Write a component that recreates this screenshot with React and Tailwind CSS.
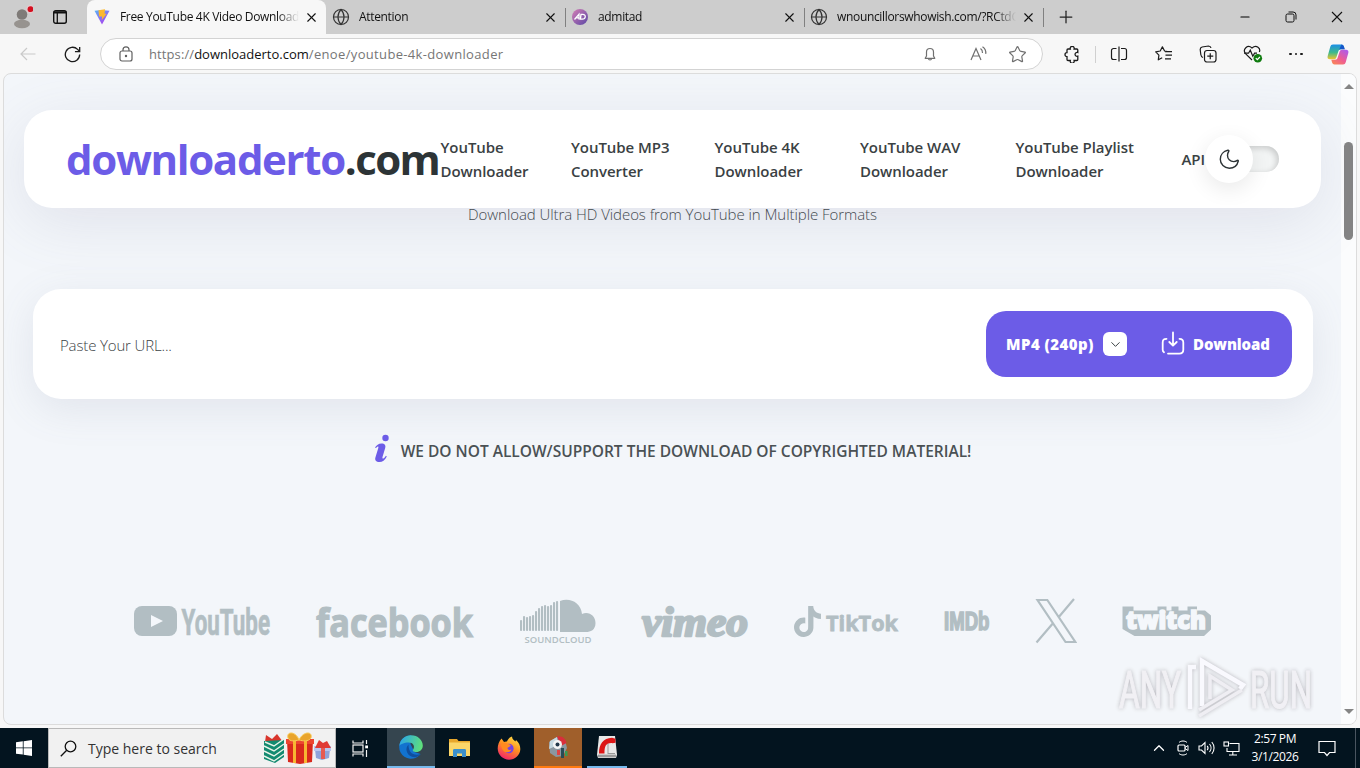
import React from "react";
import {Star, Globe, Minus, Plus, X, ChevronUp, ChevronDown} from "lucide-react";
import {SiTiktok} from "react-icons/si";

// --- DATA ---
const tabs = [
  {title: "Free YouTube 4K Video Download", icon: "vite", active: true},
  {title: "Attention", icon: "globe"},
  {title: "admitad", icon: "admitad"},
  {title: "wnouncillorswhowish.com/?RCtdC", icon: "globe"},
];

const navLinks = [
  {top: "YouTube", bottom: "Downloader", width: "w-[130.5px]"},
  {top: "YouTube MP3", bottom: "Converter", width: "w-[143.5px]"},
  {top: "YouTube 4K", bottom: "Downloader", width: "w-[145.5px]"},
  {top: "YouTube WAV", bottom: "Downloader", width: "w-[155.5px]"},
  {top: "YouTube Playlist", bottom: "Downloader", width: "w-[166px]"},
];

// [x, top] of every bar on the left of the SoundCloud mark
const soundBars = [
  [0, 21], [3, 17], [6, 18], [9, 17], [12, 16], [15, 12], [18, 9],
  [21, 7], [24, 6], [27, 7], [30, 6], [33, 3], [36, 2],
];

// --- BROWSER CHROME ---
const TabIcon = ({name}) => {
  if (name === "vite")
    return (
      <svg width="16" height="16" viewBox="0 0 16 16">
        <defs>
          <linearGradient id="vite" x1="0" y1="0" x2="0.6" y2="1">
            <stop offset="0" stopColor="#59b6f5" />
            <stop offset="1" stopColor="#a644f0" />
          </linearGradient>
        </defs>
        <path d="M.5 1.8 7.2.9l8.3.9L8 15.4z" fill="url(#vite)" />
        <path d="m4.5 1.2 6.6-1-.6 4.4 2 .3L7.8 11l.3-3.6-3 .2z" fill="#fbb82f" />
      </svg>
    );
  if (name === "admitad")
    return (
      <svg width="16" height="16" viewBox="0 0 16 16">
        <defs>
          <linearGradient id="adm" x1="0" y1="0" x2="1" y2="1">
            <stop offset="0" stopColor="#d67fb5" />
            <stop offset="1" stopColor="#5a47a5" />
          </linearGradient>
        </defs>
        <circle cx="8" cy="8" r="8" fill="url(#adm)" />
        <path d="M2.5 10.5 7 5.2v5.3M4.5 8.8H7M9 5.3h1.8c3.5 0 3.3 4.900-.6 4.900H8.400z" fill="none" stroke="#fff" strokeWidth="1.3" />
      </svg>
    );
  return <Globe size={18} strokeWidth={1.6} className="-ml-px text-[#333]" />;
};

const Tab = ({tab}) => (
  <div
    className={`relative flex h-[34px] w-[239px] items-center pl-[7px] ${
      tab.active ? "rounded-t-lg bg-[#f7f7f7]" : ""
    }`}
  >
    <div className="flex w-[26px] shrink-0 items-center">
      <TabIcon name={tab.icon} />
    </div>
    <div className="w-[179px] overflow-hidden font-['Open_Sans',sans-serif] text-xs tracking-[-0.33px] whitespace-nowrap text-[#111] [mask-image:linear-gradient(to_right,#000_88%,transparent)]">
      {tab.title}
    </div>
    <X size={15} strokeWidth={1.8} className="ml-[5px] shrink-0 text-[#111]" />
    {!tab.active && <div className="absolute top-2 -right-px h-[19px] w-px bg-[#808080]" />}
  </div>
);

const TabBar = () => (
  <div className="flex h-[34px] bg-[#cdcdcd]">
    <div className="flex w-[87px] items-center pl-[13px]">
      <svg width="20" height="24" viewBox="0 0 20 24">
        <circle cx="9" cy="9.5" r="5.3" fill="#7f7b78" />
        <ellipse cx="9" cy="19" rx="8" ry="4.2" fill="#97938f" />
        <circle cx="17.5" cy="4.2" r="4.2" fill="#e6c9cc" />
        <circle cx="17.5" cy="4.2" r="2.9" fill="#d40f1f" />
      </svg>
      <svg width="16" height="16" viewBox="0 0 16 16" className="ml-[19px]" fill="none" stroke="#111">
        <rect x="1.7" y="1.7" width="12.6" height="12.6" rx="2" strokeWidth="1.4" />
        <path d="M1.7 3.4h12.6" strokeWidth="2.2" />
        <path d="M5.3 4v10" strokeWidth="1.3" />
      </svg>
    </div>
    {tabs.map((tab) => (
      <Tab key={tab.title} tab={tab} />
    ))}
    <div className="flex w-[45px] items-center justify-center">
      <Plus size={20} strokeWidth={1.5} className="text-[#222]" />
    </div>
    <div className="ml-auto grid grid-cols-[46px_46px_46px] items-center justify-items-center">
      <Minus size={14} strokeWidth={1.9} />
      <svg width="12" height="12" viewBox="0 0 12 12" fill="none" stroke="#111">
        <rect x="1" y="3" width="8" height="8" rx="1.6" />
        <path d="M3.5 1h4.600A2.900 2.900 0 0 1 11 3.900v4.600" />
      </svg>
      <svg width="12" height="12" viewBox="0 0 12 12" stroke="#111" strokeWidth="1.1">
        <path d="m1 1 10 10M11 1 1 11" />
      </svg>
    </div>
  </div>
);

const Toolbar = () => (
  <div className="flex h-[39px] items-center bg-[#f7f7f7] pt-px">
    <div className="flex w-[100px] items-center pl-[20px]">
      <svg width="16" height="14" viewBox="0 0 16 14" fill="none" stroke="#c9c9c9" strokeWidth="1.2">
        <path d="M15.5 7H1M7 1 1 7l6 6" />
      </svg>
      <svg width="17" height="17" viewBox="0 0 18 18" className="ml-[28px]" fill="none" stroke="#1b1b1b" strokeWidth="1.4">
        <path d="M16.6 9a7.6 7.6 0 1 1-2.2-5.400l2 2M16.600 1v4.900h-5" />
      </svg>
    </div>
    <div className="flex h-[32px] w-[943px] items-center rounded-full border border-[#d3d3d3] bg-white pl-[18px] font-['Open_Sans',sans-serif] text-[13px] whitespace-nowrap">
      <svg width="14" height="16" viewBox="0 0 14 16" fill="none" stroke="#5f5f5f" strokeWidth="1.2">
        <rect x="1" y="5" width="12" height="10" rx="2" />
        <path d="M4 5V3.800a3 3 0 0 1 6 0V5" />
        <circle cx="7" cy="10" r=".6" fill="#5f5f5f" />
      </svg>
      <div className="mt-[2px] ml-[16px] text-[#767676]">
        <span className="tracking-[0.1px]">https://</span>
        <span className="text-[#111]">downloaderto.com</span>
        <span className="tracking-[0.34px]">/enoe/youtube-4k-downloader</span>
      </div>
      <div className="ml-auto flex items-center text-[#707070]">
        <svg width="12" height="14" viewBox="0 0 12 14" className="mr-[34px]" fill="none" stroke="currentColor" strokeWidth="1.2" strokeLinejoin="round">
          <path d="M2.500 9V5a3.500 3.500 0 0 1 7 0v4l1.300 2.300H1.200zM4.500 11.500a1.500 1.500 0 0 0 3 0" />
        </svg>
        <svg width="18" height="16" viewBox="0 0 18 16" fill="none" stroke="currentColor" strokeWidth="1.2">
          <path d="M1 14 6 2.500 11 14M2.700 10h6.600M10.500 2.500c1.500 1 2.200 2.600 2 4.500M12.500.8c2.600 1.700 3.600 4.200 3.200 7" />
        </svg>
        <Star size={19} strokeWidth={1.5} className="mr-[15px] ml-[20px]" />
      </div>
    </div>
    <div className="grid flex-1 grid-cols-[52px_1px_46px_43px_45px_44px_44px_40px] items-center justify-items-center text-[#1b1b1b]">
      <svg width="17" height="17" viewBox="0 0 17 17" className="mr-[-5px]" fill="none" stroke="currentColor" strokeWidth="1.3">
        <path d="M5 3h2.300a2 2 0 1 1 3.800 0h2.700a1 1 0 0 1 1 1v2.500a2 2 0 1 0 0 3.700V13.500a1 1 0 0 1-1 1H11.100a2 2 0 1 1-3.800 0H5a1 1 0 0 1-1-1v-2.800a2 2 0 1 1 0-4V4a1 1 0 0 1 1-1z" />
      </svg>
      <div className="h-[17px] w-px bg-[#d0d0d0]" />
      <svg width="18" height="16" viewBox="0 0 18 16" fill="none" stroke="currentColor" strokeWidth="1.2">
        <path d="M6.500 2.500H3.500a2 2 0 0 0-2 2v7a2 2 0 0 0 2 2h3M11 2.500h3.500a2 2 0 0 1 2 2v7a2 2 0 0 1-2 2H11M9 .5v15" />
      </svg>
      <svg width="18" height="16" viewBox="0 0 18 16" fill="none" stroke="currentColor" strokeWidth="1.2" strokeLinejoin="round">
        <path d="M12.500 5.500 9.600 5 7.400.9 5.200 5l-4.500.8 3.200 3.300-.6 4.700 3.900-2M10 5.600h7M10.500 9.200H17M10 12.800h6" />
      </svg>
      <svg width="18" height="18" viewBox="0 0 18 18" fill="none" stroke="currentColor" strokeWidth="1.2">
        <path d="M4 12.500C2.500 12 2 11 1.800 9.500L1.200 4.500c0-1.200.6-2.200 1.900-2.500l6.400-1c1.300 0 2.300.8 2.500 2" />
        <rect x="5.5" y="5.5" width="11.5" height="11.5" rx="2.5" />
        <path d="M11.250 8.200v6M8.250 11.200h6" />
      </svg>
      <svg width="20" height="18" viewBox="0 0 20 18" className="ml-[2px]" fill="none" stroke="currentColor" strokeWidth="1.2">
        <path d="M9 15 2.500 8.600C-.8 4.500 4.500-1 9 3c4.500-4 9 .5 7.300 4" />
        <path d="M1 8.200h4.500l1.800-3 2.500 6 1.800-3H14" />
        <circle cx="14.8" cy="13.2" r="4.3" fill="#107c10" stroke="none" />
        <path d="m12.800 13.200 1.500 1.500 2.600-2.700" stroke="#fff" />
      </svg>
      <div className="flex gap-[3px]">
        <span className="size-[2.5px] rounded-full bg-[#1b1b1b]" />
        <span className="size-[2.5px] rounded-full bg-[#1b1b1b]" />
        <span className="size-[2.5px] rounded-full bg-[#1b1b1b]" />
      </div>
      <svg width="22" height="21" viewBox="0 0 22 21">
        <defs>
          <linearGradient id="cpa" x1="0" y1="0" x2="0" y2="1">
            <stop offset="0" stopColor="#1a8fe8" />
            <stop offset="0.55" stopColor="#3fb98a" />
            <stop offset="1" stopColor="#f2c52d" />
          </linearGradient>
          <linearGradient id="cpb" x1="0.8" y1="0" x2="0" y2="1">
            <stop offset="0" stopColor="#b05ce8" />
            <stop offset="0.5" stopColor="#ef5d92" />
            <stop offset="1" stopColor="#fb8d4c" />
          </linearGradient>
        </defs>
        <path d="M6 .5h8.500c1.200 0 2 .8 2.400 2l.8 2.700H14c-1.500 0-2.300.8-2.700 2.200L9.500 13c-.5 1.600-1.200 2.300-2.800 2.300H3c-2 0-2.900-1.300-2.300-3.300L3.200 3C3.700 1.300 4.500.5 6 .5z" fill="url(#cpa)" />
        <path d="M14.500.6c1.200.2 2 .8 2.400 2l.8 2.600H14c-1 0-1.500.3-2 .9z" fill="#1556c9" />
        <path d="M16 20.500H7.500c-1.200 0-2-.8-2.400-2l-.8-2.700H8c1.500 0 2.300-.8 2.700-2.200L12.500 8c.5-1.600 1.200-2.300 2.800-2.300H19c2 0 2.900 1.300 2.300 3.300L18.800 18c-.5 1.700-1.300 2.500-2.800 2.500z" fill="url(#cpb)" />
      </svg>
    </div>
  </div>
);

// --- SITE HEADER ---
const SiteHeader = () => (
  <header className="relative z-10 ml-5 flex h-[98px] w-[1297px] items-center rounded-[28px] bg-white pl-[42px] font-['Open_Sans','Noto_Sans',sans-serif] shadow-[0_14px_60px_rgba(110,115,150,0.14)]">
    <div className="w-[374px] pb-px text-[42px] leading-none font-bold whitespace-nowrap">
      <span className="tracking-[-1.35px] text-[#6c5ce7]">downloaderto</span>
      <span className="tracking-[-1.6px] text-[#2d3436]">.com</span>
    </div>
    <nav className="flex pl-[0.5px] text-[15px] leading-6 font-semibold tracking-[-0.05px] text-[#3a4143]">
      {navLinks.map((link) => (
        <a key={link.top} className={link.width}>
          {link.top}
          <br />
          {link.bottom}
        </a>
      ))}
      <a className="w-[47px] self-center">API</a>
    </nav>
    <div className="relative h-[26px] w-[50px] rounded-r-full bg-[#f3f5f5] shadow-[inset_-2px_2px_6px_rgba(0,0,0,0.18)]">
      <div className="absolute -top-[11px] -left-[24px] flex size-12 items-center justify-center rounded-full bg-white shadow-[0_6px_22px_rgba(0,0,0,0.09)]">
        <svg width="21" height="21" viewBox="0 0 21 21" className="ml-[2px]" fill="none" stroke="#2d3436" strokeWidth="1.4" strokeLinejoin="round" strokeLinecap="round">
          <path d="M8.800 1.300C4.500 2.200 1.300 5.700 1.300 10.200c0 5 4 9 9 9 4.500 0 8-3 9-7.200.1-.8-.4-1-1-.6-1 .8-2.200 1.200-3.600 1.200-3.600 0-6.200-2.700-6.200-6.100 0-1.500.4-2.900 1.200-4 .5-.7.2-1.400-.9-1.200z" />
        </svg>
      </div>
    </div>
  </header>
);

// --- URL FORM ---
const UrlForm = () => (
  <div className="ml-[29px] flex h-[110px] w-[1280px] items-center rounded-[28px] bg-white pr-[21px] pl-[27px] shadow-[0_10px_40px_rgba(110,115,150,0.13)]">
    <div className="pt-[3px] font-['Open_Sans',sans-serif] text-[15px] font-light tracking-[-0.15px] text-[#3b4245]">
      Paste Your URL...
    </div>
    <div className="ml-auto flex h-[66px] w-[306px] items-center rounded-[20px] bg-[#6c5ce7] pl-5 font-['Open_Sans',sans-serif] text-[15px] font-extrabold whitespace-nowrap text-white">
      <span className="w-[97px] tracking-[0.45px]">MP4 (240p)</span>
      <span className="flex size-6 items-center justify-center rounded-md bg-white">
        <ChevronDown size={15} strokeWidth={1.5} className="text-[#2d3436]" />
      </span>
      <svg width="24" height="24" viewBox="0 0 24 24" className="mr-2 mb-[3px] ml-[34px]" fill="none" stroke="#fff" strokeWidth="1.8" strokeLinecap="round" strokeLinejoin="round">
        <path d="M12 1.500v13M8.300 11l3.700 3.700 3.700-3.700M5.500 7.800C2.800 7.800 1.700 9 1.700 11.500v7.200c0 1.200.4 2 1.300 2.600M7 22.600h11.300c2.700 0 4-1.200 4-3.800v-7.300c0-2.500-1.200-3.700-3.800-3.700" />
      </svg>
      <span className="tracking-[-0.1px]">Download</span>
    </div>
  </div>
);

// --- SUPPORTED SITES ---
const SupportedSites = () => (
  <div className="flex h-[48px] items-center gap-[45.5px] pl-[130px] text-[#b2bec3]">
    <svg width="136" height="32" viewBox="0 0 136 32" className="overflow-visible" fill="currentColor">
      <rect x="0" y="1" width="43" height="30" rx="8" />
      <path d="m17 10 12 6-12 6z" fill="#f4f7fb" />
      <text x="47.5" y="30" stroke="currentColor" strokeWidth="0.7" fontFamily="Liberation Sans Narrow, Roboto" fontWeight="700" fontSize="36" textLength="88.5" lengthAdjust="spacingAndGlyphs">YouTube</text>
    </svg>
    <svg width="158" height="36" viewBox="0 0 158 36" className="overflow-visible" fill="currentColor" stroke="currentColor" strokeWidth="1.2">
      <text x="0" y="33.5" fontFamily="Open Sans" fontWeight="700" fontSize="39" textLength="157" lengthAdjust="spacingAndGlyphs">facebook</text>
    </svg>
    <svg width="76" height="44" viewBox="0 0 76 44" className="overflow-visible" fill="currentColor">
      {soundBars.map(([x, top]) => (
        <rect key={x} x={x + 1} y={top} width="2.1" height={32 - top} rx="0.9" />
      ))}
      <path d="M41 2C50-2 62 3 63 15c7-3 13.500 2 13.500 9s-5 9-9.500 9H41z" />
      <text x="5.5" y="43.5" fontFamily="Open Sans" fontWeight="600" fontSize="9.5" textLength="67">SOUNDCLOUD</text>
    </svg>
    <svg width="108" height="36" viewBox="0 0 108 36" className="overflow-visible" fill="currentColor" stroke="currentColor" strokeWidth="2.4" strokeLinejoin="round">
      <text x="1" y="32.5" fontFamily="Liberation Serif" fontStyle="italic" fontWeight="700" fontSize="43" textLength="106" lengthAdjust="spacingAndGlyphs">vimeo</text>
    </svg>
    <div className="flex w-[105px] items-center">
      <SiTiktok size={31} className="-ml-[2px] shrink-0" />
      <svg width="77" height="24" viewBox="0 0 77 24" className="mt-[2px] overflow-visible" fill="currentColor" stroke="currentColor" strokeWidth="0.8">
        <text x="3" y="20.5" fontFamily="Open Sans" fontWeight="700" fontSize="22" textLength="72" lengthAdjust="spacingAndGlyphs">TikTok</text>
      </svg>
    </div>
    <svg width="46" height="20" viewBox="0 0 46 20" className="-ml-px overflow-visible" fill="currentColor" stroke="currentColor" strokeWidth="1.6">
      <text x="0" y="18.7" fontFamily="Liberation Sans" fontWeight="700" fontSize="25" textLength="45.5" lengthAdjust="spacingAndGlyphs">IMDb</text>
    </svg>
    <svg width="42" height="46" viewBox="0 0 42 46" fill="none" stroke="currentColor" strokeWidth="2.2">
      <path d="M2.500 2h9.800l28 42h-9.800zM39 1 24 18.800M18.200 25 1.500 44.500" />
    </svg>
    <svg width="89" height="32" viewBox="0 0 89 32" className="-ml-px overflow-visible">
      <path d="M.5 1.500h11v4h24v-4h9v4h5v-4h7v4h9v-4h9.500v4h8l6 5v14l-7 6.500H12.500L.5 24z" fill="#b2bec3" />
      <text x="4" y="23.500" fontFamily="Open Sans" fontWeight="800" fontSize="24.5" textLength="80" lengthAdjust="spacingAndGlyphs" fill="#f4f7fb" stroke="#f4f7fb" strokeWidth="1.6">twitch</text>
    </svg>
  </div>
);

const Watermark = () => (
  <svg width="200" height="66" viewBox="0 0 200 66" className="absolute right-[41px] bottom-[2px] overflow-visible opacity-90 drop-shadow-[0_0_2px_rgba(80,70,80,0.4)]">
    <g fontFamily="Liberation Sans Narrow, Roboto" fontSize="52" fill="#f1f0f4" stroke="#f1f0f4" strokeWidth="1.2">
      <text x="4" y="52" textLength="62" lengthAdjust="spacingAndGlyphs">ANY</text>
      <text x="135" y="52" textLength="62" lengthAdjust="spacingAndGlyphs">RUN</text>
    </g>
    <g fill="none" stroke="#fafaff" strokeWidth="4.5">
      <path d="M75 53V11h6M87 50V5l41 24-3 4" />
      <path d="m84 60 43-26M95 43V20l22 14-33 20" stroke="#efeef3" strokeWidth="3.5" />
    </g>
  </svg>
);

const Page = () => (
  <div className="flex h-[655px] bg-[#f7f7f7] px-[3px] pb-[3px]">
    <div className="relative flex w-[1354px] overflow-hidden rounded-lg border border-[#dcdcdc] bg-[#f3f6fa]">
      <main className="w-[1337px] pt-9">
        <SiteHeader />
        <p className="-mt-[5px] text-center font-['Open_Sans',sans-serif] text-[15px] leading-[22px] font-light tracking-[-0.06px] text-[#3f464a]">
          Download Ultra HD Videos from YouTube in Multiple Formats
        </p>
        <div className="mt-[64px]">
          <UrlForm />
        </div>
        <div className="mt-[33px] flex h-[40px] items-center justify-center gap-[11px] font-['Open_Sans',sans-serif] text-[15.5px] font-semibold text-[#4a5154]">
          <svg width="16" height="29" viewBox="0 0 16 29" className="mb-[8px]" fill="#6c5ce7">
            <circle cx="11.5" cy="4" r="3.2" />
            <path d="M1 13.500c1.500-2.300 3.500-4 6.500-4 3.300 0 4.500 1.800 3.700 4.500l-2.700 9c-.3 1.300.2 1.800 1 1.400.8-.4 1.500-1.200 2.400-2.600l.9.600C10.800 26 8.500 28 5.500 28c-3.500 0-4.900-1.800-4.100-4.500l2.900-9.500c.3-1.300-.2-1.700-.9-1.300-.5.3-.9.800-1.400 1.400z" />
          </svg>
          <span>WE DO NOT ALLOW/SUPPORT THE DOWNLOAD OF COPYRIGHTED MATERIAL!</span>
        </div>
        <div className="mt-[125px]">
          <SupportedSites />
        </div>
      </main>
      {/* Scrollbar */}
      <div className="flex flex-1 flex-col items-center bg-[#fbfcfd]">
        <div className="mt-[10px] border-x-[5px] border-b-[5px] border-x-transparent border-b-[#858585]" />
        <div className="mt-[53px] h-[98px] w-[9px] rounded-full bg-[#858585]" />
        <div className="mt-auto mb-[10px] border-x-[5px] border-t-[5px] border-x-transparent border-t-[#858585]" />
      </div>
      <Watermark />
    </div>
  </div>
);

// --- TASKBAR ---
const Gifts = () => (
  <svg width="70" height="34" viewBox="0 0 70 34">
    <path d="m3 11 1-7 6 4 5-5 6 8z" fill="#d9352b" />
    <path d="m2 10 20-1v17l-9 6-11-4z" fill="#128a70" />
    <path d="m2 15 10 5 10-7M2 20l10 5 10-7M2 25l10 5 10-7M3 11l9 4 10-7" stroke="#e6f3e8" strokeWidth="1.5" fill="none" />
    <path d="M25 9h26l-1 22-12 2-12-2z" fill="#d9291d" />
    <path d="M24 8h28v5H24z" fill="#ec4531" />
    <path d="M31 9h3v23h-3zM42 9h3v23h-3z" fill="#f7b632" />
    <path d="M37 9c-3-9-13-9-11-2 2 4 7 3 11 2 4 1 9 2 12-2 2-7-8-7-12 2z" fill="#e9a42b" stroke="#f9cb5a" />
    <path d="M53 18h15l-1 9-7 2-6-2z" fill="#8fa3da" />
    <path d="M52 15h17v5H52z" fill="#b9c5ee" />
    <path d="M59 15h4v13h-4z" fill="#e65a52" />
    <path d="m53 17 4-8 4 3 4-2 4 7z" fill="#e03a35" />
  </svg>
);

const EdgeIcon = () => (
  <svg width="24" height="24" viewBox="0 0 24 24">
    <defs>
      <linearGradient id="edgeTop" x1="0" y1="0.3" x2="1" y2="0.5">
        <stop offset="0" stopColor="#2ba5e8" />
        <stop offset="1" stopColor="#5fe07a" />
      </linearGradient>
    </defs>
    <path d="M12 .2A11.800 11.800 0 1 0 21.500 19l-6-2-4-8z" fill="#1273cf" />
    <path d="M.3 11C1 4.500 6 .2 12 .2c7 0 11.800 5 11.800 10.300 0 4-3 6.500-6.500 6.500-3 0-4.300-1.200-3-2.800 2-3-.3-6.700-4.500-6.700-5 0-8.800 2-9.500 3.500z" fill="url(#edgeTop)" />
    <path d="M9.500 9.500c-3.500 3.500-2.500 10 3.500 12.300 3.500 1 6.500 0 8.500-2.800-3.500 1.400-7.800.8-10-2-1.800-2.500-2-5.500-2-7.500z" fill="#0f4f9e" />
  </svg>
);

const TaskButton = ({children, className = ""}) => (
  <div className={`flex h-10 w-12 items-center justify-center ${className}`}>{children}</div>
);

const Taskbar = () => (
  <div className="flex h-10 bg-[#03141f]">
    <TaskButton>
      <svg width="16" height="16" viewBox="0 0 16 16" fill="#fff">
        <path d="M0 2.200 6.800 1.300v6.200H0zM7.600 1.200 16 0v7.500H7.600zM0 8.300h6.800v6.300L0 13.700zM7.600 8.300H16V16l-8.400-1.200z" />
      </svg>
    </TaskButton>
    <div className="flex w-[288px] items-center border border-[#b9b9b9] bg-[#f1f1f1] pl-[11px] text-[#333]">
      <svg width="17" height="17" viewBox="0 0 17 17" fill="none" stroke="#111" strokeWidth="1.3">
        <circle cx="10.5" cy="6.5" r="5.3" />
        <path d="M6.700 10.300.8 16.200" />
      </svg>
      <span className="mt-[2px] ml-[11px] font-['Open_Sans',sans-serif] text-sm whitespace-nowrap">
        Type here to search
      </span>
      <div className="mr-[3px] ml-auto">
        <Gifts />
      </div>
    </div>
    <TaskButton className="mr-[3px]">
      <svg width="17" height="17" viewBox="0 0 17 17" fill="none" stroke="#f2f2f2" strokeWidth="1.2">
        <rect x="1" y="5" width="10" height="7" />
        <path d="M1 .5V3h10V.5M1 16.500V14h10v2.500M14.500 0v4M14.500 10v7" />
        <path d="M13.200 5.500h2.800v2.800h-2.800z" fill="#fff" stroke="none" />
      </svg>
    </TaskButton>
    <TaskButton className="border-b-2 border-[#76b9ed] bg-[#35454f]">
      <EdgeIcon />
    </TaskButton>
    <TaskButton>
      <svg width="23" height="20" viewBox="0 0 23 20">
        <path d="M1 1h8l1.500 2H22v15H1z" fill="#e8a72c" />
        <path d="M1 4.500h21V18H1z" fill="#fbd669" />
        <path d="M5 19v-6.500c0-1 .5-1.500 1.500-1.500h10c1 0 1.500.5 1.500 1.500V19h-4v-3.500H9V19z" fill="#3b8fcb" />
      </svg>
    </TaskButton>
    <TaskButton className="ml-[2px]">
      <svg width="24" height="24" viewBox="0 0 24 24">
        <defs>
          <linearGradient id="ff" x1="0.8" y1="0" x2="0.3" y2="1">
            <stop offset="0" stopColor="#ffe14a" />
            <stop offset="0.45" stopColor="#ff9320" />
            <stop offset="1" stopColor="#f0216b" />
          </linearGradient>
        </defs>
        <path d="M4.500 2.500 7 6c1-.5 2-.7 3-.5C11 3 13 1 15 .5c0 2.500 2 3.500 3.500 5l.5-1.500c3 2.500 4.500 6 4.300 9.500-.4 6-5.300 10.200-11.300 10.200S.7 18.800.7 12.500C.7 9 2 5.500 4.500 2.500z" fill="url(#ff)" />
        <circle cx="11.8" cy="12.5" r="4.8" fill="#7542e5" />
        <path d="M4 8c2-2 5-1.500 7 0 2 .5 3 1 2.500 2-1 1-2.500 1-3 2 0 2 2 2.500 4 1.500-1 3.500-7 4-9 0C4.500 11.500 4 10 4 8z" fill="#ff8a1f" />
      </svg>
    </TaskButton>
    <TaskButton className="ml-[1px] border-b-2 border-[#ff7a10] bg-[#a05f2b]">
      <svg width="24" height="24" viewBox="0 0 24 24">
        <path d="m3 7 8-5 8 3 2 8-4 8-7 1-6-4z" fill="#8b97a0" />
        <path d="m4 6 7-4 1 8-9 4z" fill="#c5d7df" />
        <path d="M11 1.500c5-1 8.500 2 9.500 6.500L15 11z" fill="#d92e3b" />
        <circle cx="11.5" cy="9.5" r="4.5" fill="#f5f5f5" />
        <circle cx="11.5" cy="9.5" r="2" fill="#23374a" />
        <path d="M11 15h3v5h-3z" fill="#e14343" />
        <path d="M15 13h3v10h-3z" fill="#284b55" />
        <path d="M19 16h2.500v5H19z" fill="#3a9a52" />
      </svg>
    </TaskButton>
    <div className="ml-[5px] flex w-10 items-center justify-center border-b-2 border-[#76b9ed]">
      <svg width="22" height="24" viewBox="0 0 22 22" preserveAspectRatio="none">
        <path d="M3 1h16l2 17-1 3H2l-1-3z" fill="#e8e8e8" />
        <path d="M2 18h18v2.500H2z" fill="#9b9b9b" />
        <path d="M3 17C3 8 7 3 16 2.500l3.500 1V7l-3 .5C10 7 8.500 10 8.500 17z" fill="#dc1717" />
        <path d="M12 8v9h7" fill="none" stroke="#999" />
      </svg>
    </div>
    {/* Tray */}
    <div className="ml-auto flex items-center text-white">
      <ChevronUp size={18} strokeWidth={1.7} className="mr-[8px]" />
      <svg width="14" height="16" viewBox="0 0 14 16" fill="none" stroke="#fff">
        <path d="M3 2.500C5 .5 9 .5 11 2.500M3 13.500c2 2 6 2 8 0" />
        <rect x="2" y="5" width="7" height="6" rx="1" strokeWidth="1.2" />
        <path d="m9 7.500 3-2v5l-3-2" />
      </svg>
      <svg width="18" height="14" viewBox="0 0 18 14" className="ml-[8px]" fill="none" stroke="#fff" strokeWidth="1.1">
        <path d="M1 5h2.500L7 1.500v11L3.500 9H1zM9.200 4.800c1 1.300 1 3.100 0 4.400M11.500 3c2 2.300 2 5.700 0 8M13.800 1c3 3.500 3 8.500 0 12" />
      </svg>
      <svg width="17" height="15" viewBox="0 0 17 15" className="ml-[7px]" fill="none" stroke="#fff" strokeWidth="1.1">
        <path d="M6.500 2.500H16v8H4V7M9.800 10.500v3.500M6 14h8" />
        <rect x="1" y="1" width="4.5" height="4" />
      </svg>
      <div className="ml-[11px] w-[48px] text-center font-['Open_Sans',sans-serif] text-xs leading-[18px] tracking-[-0.4px] whitespace-nowrap">
        <div>2:57 PM</div>
        <div>3/1/2026</div>
      </div>
      <svg width="18" height="17" viewBox="0 0 18 17" className="mr-[19px] ml-[19px]" fill="none" stroke="#fff" strokeWidth="1.2">
        <path d="M1 1.500h16v11h-5.500L9 15.500l-2.500-3H1z" />
      </svg>
      <div className="mr-1 h-10 w-px bg-[#4a5560]" />
    </div>
  </div>
);

export default function App() {
  return (
    <div className="flex h-[768px] w-[1360px] flex-col overflow-hidden">
      <TabBar />
      <Toolbar />
      <Page />
      <Taskbar />
    </div>
  );
}
